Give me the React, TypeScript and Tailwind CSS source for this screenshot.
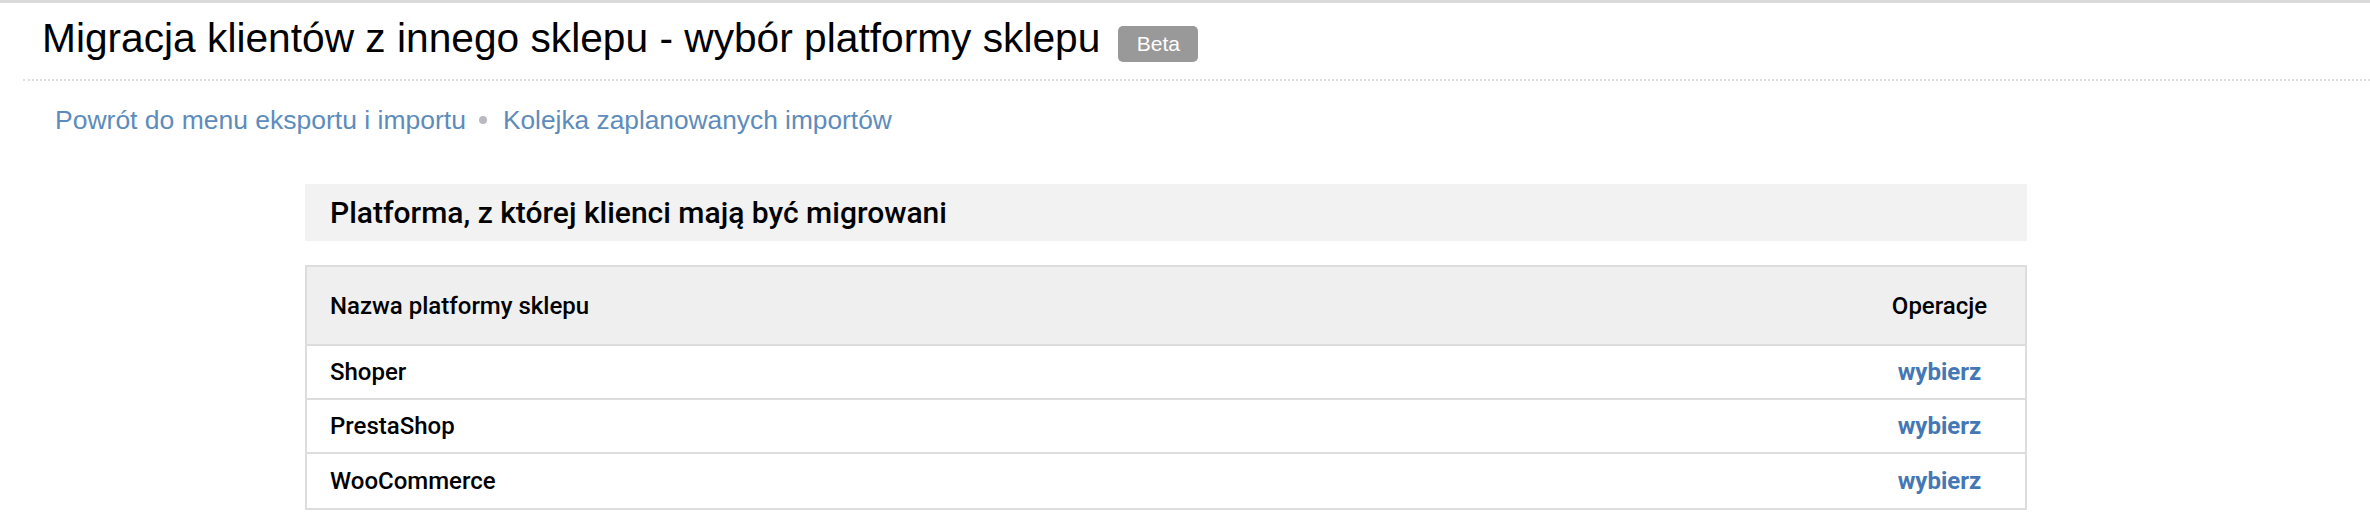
import React from 'react'

const platforms = ['Shoper', 'PrestaShop', 'WooCommerce']

const sans = "font-['Liberation_Sans',Arial,sans-serif]"
const roboto = "font-['Roboto','Noto_Sans',sans-serif]"

const App: React.FC = () => {
  return (
    <div className="min-h-screen bg-white">
      <div className="h-[3px] bg-[#dadada]" />

      <div className="ml-[23px] flex items-start border-b-2 border-dotted border-[#dedede] pt-[11px] pb-[17px]">
        <h1 className={`${sans} pl-[19px] text-[40.7px] leading-[48px] font-normal text-black`}>
          Migracja klientów z innego sklepu - wybór platformy sklepu
        </h1>
        <span
          className={`${sans} ml-[18px] mt-[12px] flex h-[36px] w-[80px] items-center justify-center rounded-[5px] bg-[#999999] text-[21px] text-white`}
        >
          Beta
        </span>
      </div>

      <div className={`${sans} mt-[23px] flex items-center pl-[55px] text-[26.5px] leading-[32px] text-[#5d8cbc]`}>
        <a href="#">Powrót do menu eksportu i importu</a>
        <span className="ml-[13px] mr-[16px] h-[8px] w-[8px] rounded-full bg-[#b9b9c1]" />
        <a href="#" className="text-[26.3px]">Kolejka zaplanowanych importów</a>
      </div>

      <div className={`${roboto} ml-[305px] w-[1722px]`}>
        <div className="mt-[48px] flex h-[57px] items-center bg-[#f2f2f2] px-[25px]">
          <h2 className="text-[30px] font-medium text-black">Platforma, z której klienci mają być migrowani</h2>
        </div>

        <div className="mt-[24px] border-2 border-[#dddddd] text-[24px] font-medium text-black">
          <div className="flex h-[79px] items-center border-b-2 border-[#dddddd] bg-[#efefef]">
            <div className="flex-1 pl-[23px]">Nazwa platformy sklepu</div>
            <div className="w-[171px] text-center">Operacje</div>
          </div>
          {platforms.map((name, i) => (
            <div
              key={name}
              className={`flex h-[54px] items-center ${i < platforms.length - 1 ? 'border-b-2 border-[#dddddd]' : ''}`}
            >
              <div className="flex-1 pl-[23px]">{name}</div>
              <div className="w-[171px] text-center">
                <a href="#" className="font-bold text-[#4577b5]">
                  wybierz
                </a>
              </div>
            </div>
          ))}
        </div>
      </div>
    </div>
  )
}

export default App
